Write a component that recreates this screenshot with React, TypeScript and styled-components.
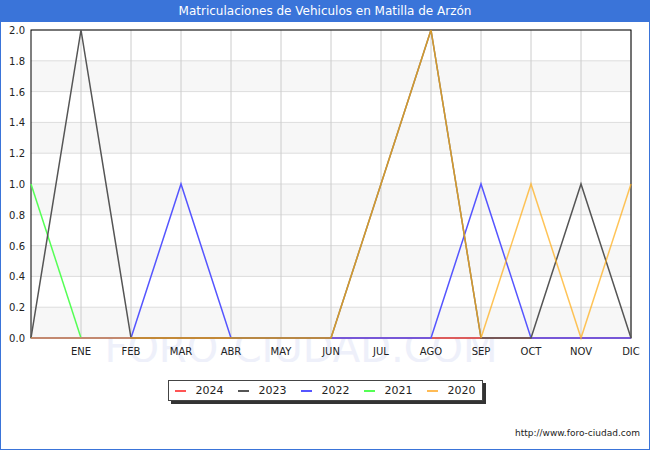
import React from "react";
import styled, { createGlobalStyle } from "styled-components";

const G = createGlobalStyle`
  body { margin: 0; font-family: "DejaVu Sans", sans-serif; }
`;
const Frame = styled.div`
  width: 650px; height: 450px; box-sizing: border-box;
  border: 1px solid #3a74d9; border-top: none;
  display: flex; flex-direction: column; background: #fff;
`;
const Title = styled.div`
  height: 22px; background: #3a74d9; color: #fff; font-size: 12px;
  display: flex; align-items: center; justify-content: center;
`;
const ChartBox = styled.div` position: relative; height: 340px; `;
const Legend = styled.div`
  align-self: center; margin: 18px 0 0 0; display: flex; gap: 14px;
  border: 1px solid #444; box-shadow: 3px 3px 0 #333; padding: 3px 6px;
  font-size: 11px; color: #222;
`;
const Item = styled.span`
  display: flex; align-items: center; gap: 10px;
  &::before { content: ""; width: 11px; height: 2px; background: ${p => p.color}; }
`;
const Url = styled.div`
  margin-top: auto; align-self: flex-end; font-size: 9px; color: #222;
  padding: 0 9px 11px 0;
`;

const X0 = 30, Y0 = 338 - 22, H = 308;
const px = (i: number) => X0 + i * 50;
const py = (v: number) => Y0 - (v / 2) * H;
const pts = (d: number[], start = 0) => d.map((v, i) => `${px(i + start)},${py(v)}`).join(" ");
const months = ["ENE","FEB","MAR","ABR","MAY","JUN","JUL","AGO","SEP","OCT","NOV","DIC"];

export default function App() {
  const s2023 = [0,2,0,0,0,0,0,1,2,0,0,1,0];
  const s2022 = [0,0,0,1,0,0,0,0,0,1,0,0,0];
  const s2020 = [0,0,0,0,0,0,0,1,2,0,1,0,1];
  return (
    <Frame>
      <G />
      <Title>Matriculaciones de Vehiculos en Matilla de Arzón</Title>
      <ChartBox>
        <svg width="648" height="340" style={{ position: "absolute", left: 0, top: 0 }}>
          <text x="300" y="340" fontSize="40" fill="#eef0fa" textAnchor="middle" fontFamily="DejaVu Sans">FORO-CIUDAD.COM</text>
          {[0,0.4,0.8,1.2,1.6].map(v => (
            <rect key={v} x={X0} y={py(v + 0.2)} width={600} height={H / 10} fill="#f7f7f7" />
          ))}
          {Array.from({ length: 11 }, (_, k) => (
            <line key={"h"+k} x1={X0} x2={630} y1={py(k*0.2)} y2={py(k*0.2)} stroke="#ddd" />
          ))}
          {months.map((_, i) => (
            <line key={"v"+i} x1={px(i+1)} x2={px(i+1)} y1={py(2)} y2={Y0} stroke="#ccc" />
          ))}
          <rect x={X0} y={py(2)} width={600} height={H} fill="none" stroke="#000" />
          {Array.from({ length: 11 }, (_, k) => (
            <text key={"y"+k} x={24} y={py(k*0.2)+4} fontSize="10" textAnchor="end" fill="#222">{(k*0.2).toFixed(1)}</text>
          ))}
          {months.map((m, i) => (
            <text key={m} x={px(i+1)} y={Y0+17} fontSize="10" textAnchor="middle" fill="#222">{m}</text>
          ))}
          <line x1={X0} x2={630} y1={Y0} y2={Y0} stroke="#ff5555" strokeWidth="1.5" />
          <polyline points={pts([1,0])} fill="none" stroke="#55ff55" strokeWidth="1.5" />
          <polyline points={pts(s2022)} fill="none" stroke="#5555ff" strokeWidth="1.5" />
          <polyline points={pts(s2023)} fill="none" stroke="#555" strokeWidth="1.5" />
          <polyline points={pts(s2020)} fill="none" stroke="#ffb020" strokeOpacity="0.75" strokeWidth="1.5" />
        </svg>
      </ChartBox>
      <Legend>
        <Item color="#ff5555">2024</Item>
        <Item color="#555">2023</Item>
        <Item color="#5555ff">2022</Item>
        <Item color="#55ff55">2021</Item>
        <Item color="#ffbb55">2020</Item>
      </Legend>
      <Url>http://www.foro-ciudad.com</Url>
    </Frame>
  );
}
